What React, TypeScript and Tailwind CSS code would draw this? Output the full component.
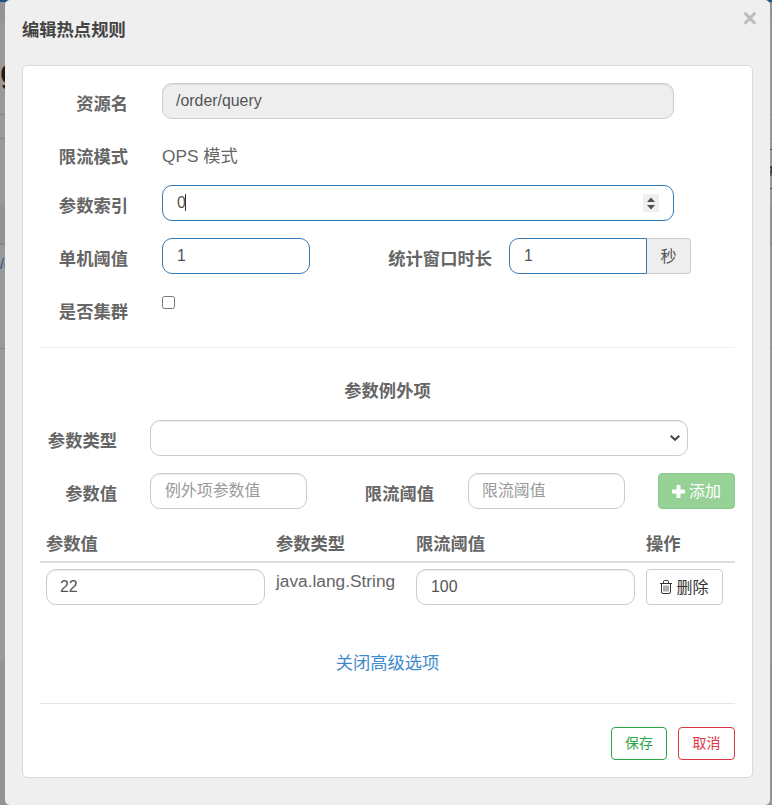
import { ReactNode } from 'react';

const inputBase = 'block h-9 rounded-[10px] border px-[14px] text-[15.9px] text-[#555] outline-none';
const inputGrey = 'border-[#ccc] shadow-[inset_0_1px_1px_rgba(0,0,0,0.075)] placeholder-[#999]';
const inputBlue = 'border-[#337ab7]';

interface LabelProps {
  width: string;
  children: ReactNode;
}

function Label({ width, children }: LabelProps) {
  return <label className={`${width} shrink-0 whitespace-nowrap pt-[9px] text-right font-bold leading-6`}>{children}</label>;
}

function PlusIcon() {
  return (
    <svg className="h-[13px] w-[13px]" viewBox="0 0 13 13" fill="currentColor">
      <path d="M5 0h3q.5 0 .5.5v4h4q.5 0 .5.5v3q0 .5-.5.5h-4v4q0 .5-.5.5H5q-.5 0-.5-.5v-4h-4Q0 8.500 0 8V5q0-.5.5-.5h4v-4Q4.500 0 5 0z" />
    </svg>
  );
}

function TrashIcon() {
  return (
    <svg className="h-[14px] w-3" viewBox="0 0 12 14" fill="none" stroke="currentColor">
      <path d="M0 3.500h12M3.500 3V1.500Q3.500.5 4.500.5h3Q8.500.5 8.500 1.500V3M1.500 3.500V12q0 1.500 1.500 1.500h6q1.500 0 1.500-1.500V3.500" />
      <path strokeWidth=".8" d="M4 5.500v6M6 5.500v6M8 5.500v6" />
    </svg>
  );
}

// Page behind the modal, only its edges stay visible
function Backdrop() {
  return (
    <div className="flex h-full flex-col bg-[#999]">
      <div className="h-[2px] bg-[#1f5080]" />
      <div className="h-5 bg-[#949494]" />
      <div className="h-[92px]" />
      <div className="h-[25px] border-y border-[#858585]" />
      <div className="h-[66px]" />
      <div className="h-10 border-b-2 border-[#888] bg-[#919294]" />
      <div className="h-[104px] border-b border-[#858585]" />
      <div className="h-[312px]" />
      <div className="flex-1 bg-[#949494]" />
    </div>
  );
}

export default function App() {
  return (
    <div className="relative h-[805px] w-[772px] overflow-hidden font-['Liberation_Sans','Noto_Sans_CJK_SC',sans-serif] text-[17.3px] text-[#666]">
      <Backdrop />
      <span className="absolute left-0 top-[49px] text-[34px] font-bold leading-[44px] text-[#1b1b1b]">g</span>
      <span className="absolute left-0 top-[254px] text-[14px] leading-5 text-[#1f5080]">/o</span>
      <div className="absolute right-0 top-[149px] h-10 w-[7px] border-y border-[#1f5080] pt-[9px] text-[12px] leading-5 text-[#222]">
        <span className="block w-[7px] pl-px">g</span>
      </div>

      <div className="absolute left-[5px] top-0 h-[805px] w-[765px] rounded-[5px] bg-[#efefef] px-[17px]">
        <div className="flex h-[65px] items-start justify-between pt-[18px]">
          <h4 className="font-bold leading-6 text-[#444]">编辑热点规则</h4>
          <button className="-mr-[4px] -mt-[13px] text-[25px] font-bold leading-[26px] text-[#bbb]">×</button>
        </div>

        <div className="h-[713px] w-[731px] rounded-[5px] border border-[#d9d9d9] bg-white px-[17px] pt-[17px]">
          <div className="flex h-[53px]">
            <Label width="w-[88px]">资源名</Label>
            <input className={`${inputBase} ml-[34px] w-[512px] border-[#ccc] bg-[#eee] pl-[13px] shadow-[inset_0_1px_1px_rgba(0,0,0,0.075)]`} defaultValue="/order/query" readOnly />
          </div>
          <div className="flex h-[49px]">
            <Label width="w-[88px]">限流模式</Label>
            <p className="ml-[34px] pt-2 leading-6">QPS 模式</p>
          </div>
          <div className="flex h-[53px]">
            <Label width="w-[88px]">参数索引</Label>
            <div className={`${inputBase} ${inputBlue} ml-[34px] flex w-[512px] items-center`}>
              <span className="-mt-px">0</span>
              <span className="-ml-px -mt-px h-[17px] w-px bg-[#333]" />
              <svg className="ml-auto h-[18px] w-4 bg-[#efefef]" viewBox="0 0 16 18" fill="#505050">
                <path d="M4 8L8 3.500L12 8zM4 11h8L8 15.500z" />
              </svg>
            </div>
          </div>
          <div className="flex h-[53px]">
            <Label width="w-[88px]">单机阈值</Label>
            <input className={`${inputBase} ${inputBlue} ml-[34px] w-[148px]`} defaultValue="1" />
            <Label width="w-[182px]">统计窗口时长</Label>
            <div className="ml-[17px] flex">
              <input className={`${inputBase} ${inputBlue} w-[138px] rounded-r-none`} defaultValue="1" />
              <span className="flex h-9 w-11 items-center justify-center rounded-r-[4px] border border-l-0 border-[#ccc] bg-[#eee] pt-[2px] text-[16px] text-[#555]">秒</span>
            </div>
          </div>
          <div className="flex h-[56px]">
            <Label width="w-[88px]">是否集群</Label>
            <input type="checkbox" className="ml-[34px] mt-[5px] h-[13px] w-[13px]" />
          </div>
          <hr className="border-[#eee]" />

          <h5 className="pt-[31px] text-center font-bold leading-6">参数例外项</h5>
          <div className="mt-[17px] flex h-[53px]">
            <Label width="w-[77px]">参数类型</Label>
            <div className={`${inputBase} ${inputGrey} ml-[33px] flex w-[538px] items-center justify-end pr-[7px]`}>
              <svg className="h-[6px] w-[10px]" viewBox="0 0 10 6" fill="none" stroke="#444" strokeWidth="2">
                <path d="M.7 .8L5 4.800L9.300 .8" />
              </svg>
            </div>
          </div>
          <div className="flex h-[53px]">
            <Label width="w-[77px]">参数值</Label>
            <input className={`${inputBase} ${inputGrey} ml-[33px] w-[157px]`} placeholder="例外项参数值" />
            <Label width="w-[127px]">限流阈值</Label>
            <input className={`${inputBase} ${inputGrey} ml-[34px] w-[157px] pl-[13px]`} placeholder="限流阈值" />
            <button className="ml-auto flex h-9 w-[77px] items-center justify-center gap-1 rounded-[4px] border border-[#8bcb8b] bg-[#96d296] text-[16px] text-white">
              <PlusIcon />
              <span className="pt-[2px]">添加</span>
            </button>
          </div>

          <div className="flex h-[37px] border-b-2 border-[#ddd] pl-[6px] pt-[6px] font-bold leading-6">
            <span className="w-[230px]">参数值</span>
            <span className="w-[140px]">参数类型</span>
            <span className="w-[230px]">限流阈值</span>
            <span>操作</span>
          </div>
          <div className="flex pl-[6px] pt-[6px]">
            <input className={`${inputBase} ${inputGrey} w-[219px] pl-[13px]`} defaultValue="22" />
            <span className="ml-[11px] w-[140px] leading-6">java.lang.String</span>
            <input className={`${inputBase} ${inputGrey} w-[219px]`} defaultValue="100" />
            <button className="ml-[11px] flex h-9 w-[77px] items-center justify-center gap-1 rounded-[4px] border border-[#ccc] text-[16px] text-[#333]">
              <TrashIcon />
              <span className="pt-[2px]">删除</span>
            </button>
          </div>

          <div className="mt-[46px] text-center leading-6 text-[#428bca]">关闭高级选项</div>
          <hr className="mt-[28px] border-[#e4e4e4]" />
          <div className="mt-[23px] flex justify-end gap-[11px]">
            <button className="h-[33px] w-14 rounded-[4px] border border-[#28a745] text-[14px] text-[#28a745]">保存</button>
            <button className="h-[33px] w-[57px] rounded-[4px] border border-[#dc3545] text-[14px] text-[#dc3545]">取消</button>
          </div>
        </div>
      </div>
    </div>
  );
}
